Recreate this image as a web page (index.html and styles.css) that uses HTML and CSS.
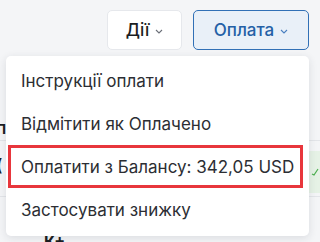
FILE: index.html
```html
<!DOCTYPE html>
<html lang="uk">
<head>
<meta charset="utf-8">
<link rel="stylesheet" href="styles.css">
</head>
<body>
<div class="page">
  <div class="toolbar">
    <button class="btn btn-plain">Дії <svg class="chev" width="8" height="5" viewBox="0 0 8 5"><path d="M1 1l3 3 3-3" fill="none" stroke="currentColor" stroke-width="1.1"/></svg></button>
    <button class="btn btn-primary">Оплата <svg class="chev" width="8" height="5" viewBox="0 0 8 5"><path d="M1 1l3 3 3-3" fill="none" stroke="currentColor" stroke-width="1.1"/></svg></button>
  </div>
  <div class="content">
    <div class="row row-a"><span class="cut">п</span></div>
    <div class="row row-b"><span class="cut">(</span><span class="paid"><svg width="8" height="8" viewBox="0 0 8 8"><path d="M1 6l2 1 4-6" fill="none" stroke="#4caf50" stroke-width="1.2"/></svg></span></div>
    <div class="row row-c"><span class="kplus">К+</span></div>
  </div>
  <div class="menu">
    <div class="item">Інструкції оплати</div>
    <div class="item">Відмітити як Оплачено</div>
    <div class="item item-marked">Оплатити з Балансу: 342,05 USD</div>
    <div class="item">Застосувати знижку</div>
  </div>
</div>
</body>
</html>
```
FILE: styles.css
```css
* { box-sizing: border-box; }
html, body { margin: 0; padding: 0; }
body {
  background: #f4f5f7;
  font-family: Inter, "Noto Sans", sans-serif;
  width: 320px;
  height: 242px;
  overflow: hidden;
}
.page { position: relative; width: 320px; height: 242px; overflow: hidden; }
.toolbar {
  display: flex;
  justify-content: flex-end;
  gap: 11px;
  padding: 10px 11px 0 0;
}
.btn {
  height: 40px;
  border-radius: 5px;
  font-family: Inter, sans-serif;
  font-size: 17px;
  display: flex;
  align-items: center;
  justify-content: center;
  gap: 6px;
  padding: 0;
}
.btn-plain {
  width: 75px;
  background: #ffffff;
  border: 1px solid #e6e8ec;
  color: #1b1d22;
  font-weight: 500;
}
.btn-primary {
  width: 116px;
  background: #e9f0f8;
  border: 1px solid #3170b6;
  color: #2460a6;
  font-weight: 500;
}
.chev { margin-top: 3px; color: #6b6f78; }
.btn-primary .chev { color: #4a7fc0; }
.content { padding-top: 56px; }
.row { position: relative; }
.row-a { height: 35px; border-bottom: 1px solid #e3e5e9; }
.row-b { height: 56px; border-bottom: 1px solid #e3e5e9; }
.row-c { height: 30px; }
.cut { position: absolute; left: -4px; font-size: 17px; color: #1b1d22; font-weight: 600; }
.row-a .cut { top: 12px; }
.row-b .cut { top: 14px; }
.paid {
  position: absolute;
  right: 0;
  top: 10px;
  width: 11px;
  height: 42px;
  background: #e6f2e6;
  display: flex;
  align-items: center;
  justify-content: flex-end;
  padding-right: 1px;
}
.kplus { position: absolute; left: 44px; top: 36px; font-size: 16px; font-weight: 700; color: #1b1d22; line-height: 16px; }
.menu {
  position: absolute;
  top: 56px;
  left: 6px;
  width: 303px;
  background: #ffffff;
  border-radius: 5px;
  box-shadow: 0 2px 8px rgba(30, 40, 60, 0.12);
  padding: 3px 0 5px 0;
}
.item {
  height: 43px;
  display: flex;
  align-items: center;
  padding-left: 15px;
  font-size: 17px;
  color: #2c2e33;
  white-space: nowrap;
}
.item-marked {
  border: 3px solid #e8363c;
  margin: 0 6px 0 2px;
  padding-left: 10px;
}
```
